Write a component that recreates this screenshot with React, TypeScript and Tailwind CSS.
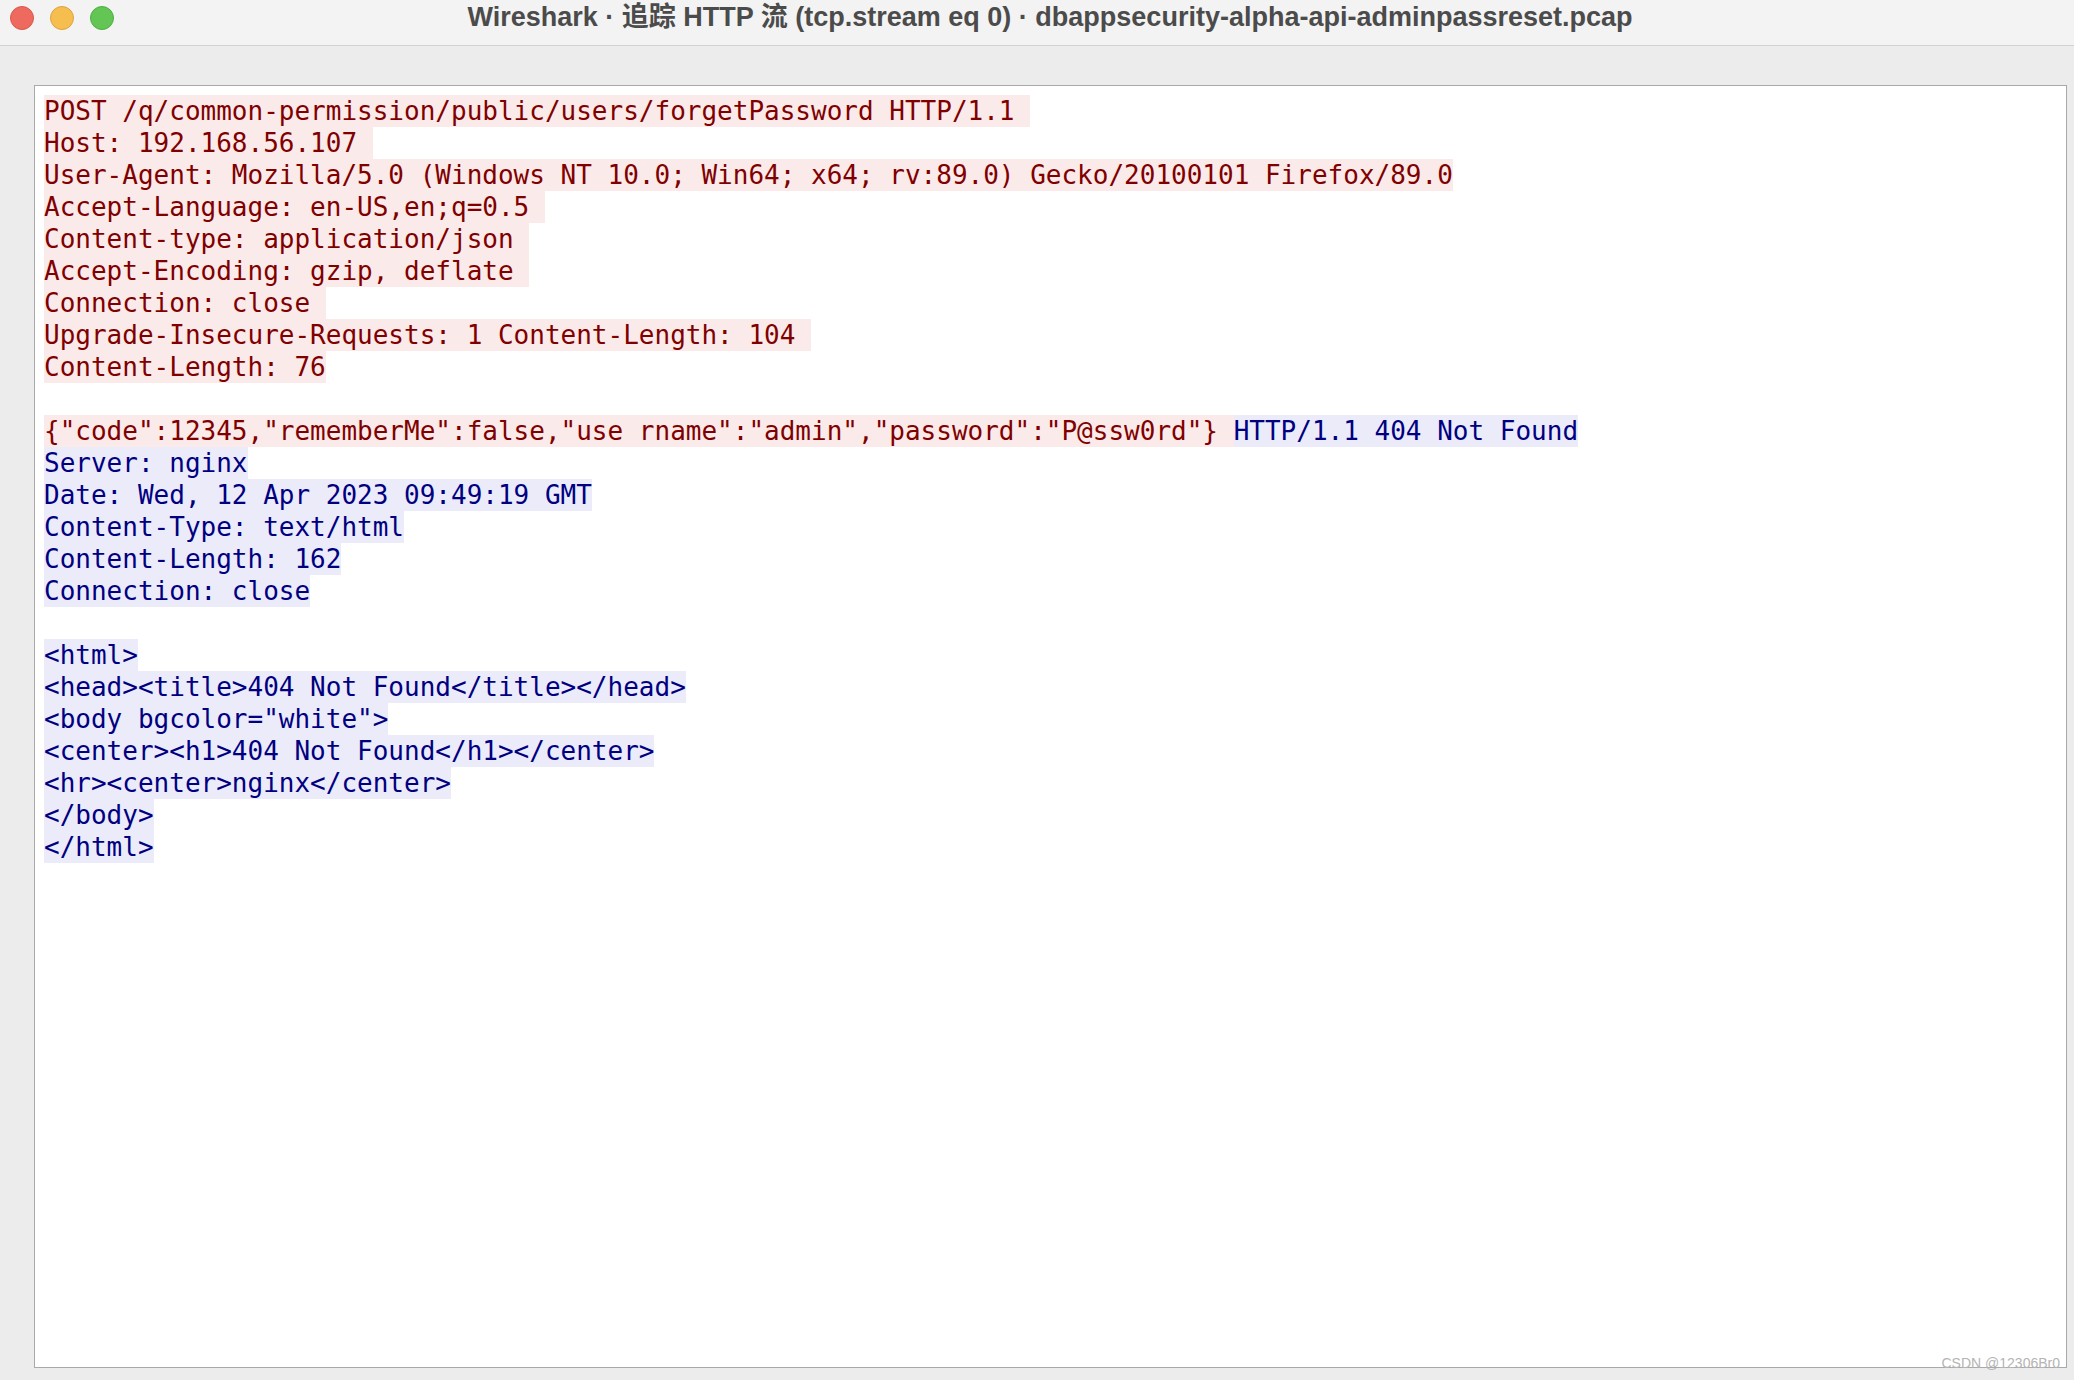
type Seg = { text: string; side: "c" | "s" };
type Line = Seg[];

const c = (text: string): Line => [{ text, side: "c" }];
const s = (text: string): Line => [{ text, side: "s" }];

const lines: Line[] = [
  c("POST /q/common-permission/public/users/forgetPassword HTTP/1.1 "),
  c("Host: 192.168.56.107 "),
  c("User-Agent: Mozilla/5.0 (Windows NT 10.0; Win64; x64; rv:89.0) Gecko/20100101 Firefox/89.0"),
  c("Accept-Language: en-US,en;q=0.5 "),
  c("Content-type: application/json "),
  c("Accept-Encoding: gzip, deflate "),
  c("Connection: close "),
  c("Upgrade-Insecure-Requests: 1 Content-Length: 104 "),
  c("Content-Length: 76"),
  [],
  [
    { text: '{"code":12345,"rememberMe":false,"use rname":"admin","password":"P@ssw0rd"} ', side: "c" },
    { text: "HTTP/1.1 404 Not Found", side: "s" },
  ],
  s("Server: nginx"),
  s("Date: Wed, 12 Apr 2023 09:49:19 GMT"),
  s("Content-Type: text/html"),
  s("Content-Length: 162"),
  s("Connection: close"),
  [],
  s("<html>"),
  s("<head><title>404 Not Found</title></head>"),
  s('<body bgcolor="white">'),
  s("<center><h1>404 Not Found</h1></center>"),
  s("<hr><center>nginx</center>"),
  s("</body>"),
  s("</html>"),
];

function StreamLine({ line }: { line: Line }) {
  return (
    <div className="h-[32px] leading-[32px] whitespace-pre">
      {line.map((seg, i) =>
        seg.side === "c" ? (
          <span key={i} className="inline-block h-[32px] bg-[#fbeaea] text-[#800000]">
            {seg.text}
          </span>
        ) : (
          <span key={i} className="inline-block h-[32px] bg-[#ebebfa] text-[#000080]">
            {seg.text}
          </span>
        )
      )}
    </div>
  );
}

export default function App() {
  return (
    <div className="relative flex h-[1380px] w-[2074px] flex-col overflow-hidden bg-[#ececec]">
      {/* Title bar */}
      <div className="flex h-[46px] shrink-0 items-start border-b border-[#d2d2d2] bg-[#f3f3f3]">
        <div className="flex h-[36px] items-center gap-[16px] pl-[10px]">
          <span className="h-[24px] w-[24px] rounded-full border border-[#d9574b] bg-[#ee6a5f]" />
          <span className="h-[24px] w-[24px] rounded-full border border-[#dea33d] bg-[#f5be4f]" />
          <span className="h-[24px] w-[24px] rounded-full border border-[#4fae43] bg-[#62c554]" />
        </div>
        <div className="flex h-[35px] flex-1 items-center justify-center font-['Liberation_Sans','Noto_Sans_CJK_SC',sans-serif] text-[27px] font-bold text-[#4b4b4b]">
          Wireshark · 追踪 HTTP 流 (tcp.stream eq 0) · dbappsecurity-alpha-api-adminpassreset.pcap
        </div>
        <div className="w-[88px]" />
      </div>

      {/* Stream content */}
      <div className="flex flex-1 flex-col pb-[12px] pl-[34px] pr-[7px] pt-[39px]">
        <div className="flex-1 border border-[#a9a9a9] bg-white p-[9px] font-['DejaVu_Sans_Mono',monospace] text-[26px]">
          {lines.map((line, i) => (
            <StreamLine key={i} line={line} />
          ))}
        </div>
      </div>

      {/* watermark */}
      <div className="absolute bottom-[6px] right-[14px] font-['Liberation_Sans',sans-serif] text-[14px] text-[#b4b4b4]">
        CSDN @12306Br0
      </div>
    </div>
  );
}
